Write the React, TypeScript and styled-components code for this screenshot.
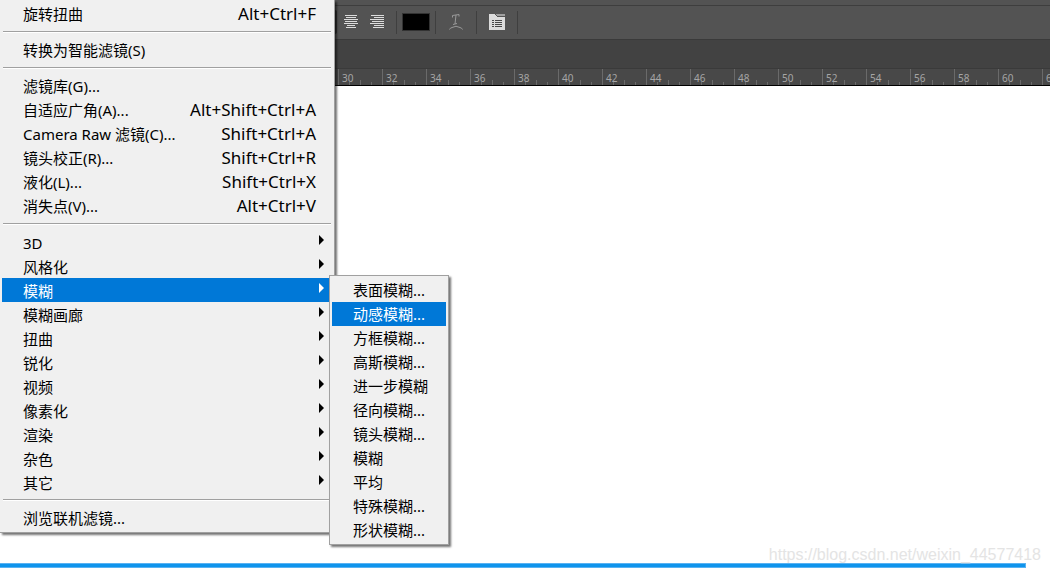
import React from "react";
import styled, { createGlobalStyle } from "styled-components";

const GlobalStyle = createGlobalStyle`
  *, *::before, *::after { box-sizing: border-box; }
  body {
    margin: 0;
    background: #fff;
    color: #000;
    font-family: "Noto Sans", "Noto Sans CJK SC", sans-serif;
    overflow: hidden;
  }
  button { font: inherit; color: inherit; border: 0; background: none; padding: 0; margin: 0; }
`;

const Page = styled.main`
  position: relative;
  display: flex;
  flex-direction: column;
  min-height: 100vh;
  background: #fff;
`;

const Toolbar = styled.header`
  display: flex;
  align-items: center;
  height: 40px;
  padding: 5px 0 0 313px;
  background: linear-gradient(#535353 5px, #3e3e3e 5px, #3e3e3e 6px, #535353 6px);
  border-bottom: 1px solid #3a3a3a;
`;

const ToolButton = styled.button<{ $pressed?: boolean }>`
  display: flex;
  align-items: center;
  justify-content: center;
  width: 24px;
  height: 24px;
  border-radius: 2px;
  background: ${(p) => (p.$pressed ? "#303030" : "transparent")};
`;

const AlignGroup = styled.div`
  display: flex;
  gap: 2px;
  margin-right: 7px;
`;

const Divider = styled.span`
  width: 1px;
  height: 23px;
  background: #3f3f3f;
`;

const Swatch = styled.button`
  width: 28px;
  height: 18px;
  background: #000;
  border: 1px solid #333;
`;

const ToolSlot = styled.div`
  display: flex;
  justify-content: center;
  width: 40px;
`;

const SwatchSlot = styled(ToolSlot)`
  width: 38px;
`;

const TabBar = styled.div`
  height: 28px;
  background: #424242;
`;

const Ruler = styled.div`
  display: flex;
  height: 18px;
  padding-left: 338px;
  background: #484848;
  border-top: 1px solid #3a3a3a;
  border-bottom: 1px solid #000;
  overflow: hidden;
`;

const RulerCell = styled.div`
  display: flex;
  flex: none;
  align-items: flex-end;
  width: 44px;
  color: #a6a6a6;
  font: 10px/14px "Noto Sans", sans-serif;
  border-left: 1px solid #6a6a6a;
  padding-left: 3px;
  background:
    linear-gradient(#6a6a6a, #6a6a6a) 10px 100% / 1px 3px no-repeat,
    linear-gradient(#6a6a6a, #6a6a6a) 21px 100% / 1px 5px no-repeat,
    linear-gradient(#6a6a6a, #6a6a6a) 32px 100% / 1px 3px no-repeat;
`;

const Canvas = styled.section`
  flex: 1;
  display: flex;
  flex-direction: column;
  justify-content: flex-end;
`;

const Watermark = styled.a`
  position: relative;
  align-self: flex-end;
  margin-right: 9px;
  color: #e4e4e4;
  font: 16px/16px "Liberation Sans", sans-serif;
  text-decoration: none;
`;

const Progress = styled.div`
  height: 5px;
  margin: 0 24px 5px 0;
  background: #0f94ec;
  border: solid #59b2f2;
  border-width: 1px 1px 1px 0;
`;

const Menu = styled.nav`
  position: absolute;
  background: #f0f0f0;
  padding: 2px;
  border: 1px solid #a0a0a0;
  box-shadow: 2px 2px 2px rgba(0, 0, 0, 0.55);
  font-size: 15px;
  line-height: 24px;
`;

const MainMenu = styled(Menu)`
  top: 0;
  left: 0;
  width: 335px;
  border-width: 0 1px 1px 0;
`;

const SubMenu = styled(Menu)`
  top: 275px;
  left: 329px;
  width: 120px;
`;

const MenuItem = styled.button<{ $active?: boolean }>`
  display: flex;
  justify-content: space-between;
  width: 100%;
  height: 24px;
  padding: 0 16px 0 21px;
  text-align: left;
  white-space: nowrap;
  line-height: 24px;
  background: ${(p) => (p.$active ? "#0078d7" : "transparent")};
  color: ${(p) => (p.$active ? "#fff" : "#000")};
`;

const Shortcut = styled.span`
  font-size: 17px;
`;

const ParentItem = styled(MenuItem)`
  padding-top: 1px;
  padding-right: 8px;
`;

const Arrow = styled.svg`
  width: 5px;
  height: 10px;
  margin-top: 4px;
  fill: currentColor;
`;

const Separator = styled.hr`
  height: 2px;
  margin: 5px 1px;
  border: 0;
  border-top: 1px solid #a0a0a0;
  background: #fff;
`;

type Entry = { label: string; keys?: string };

const filters: Entry[] = [
  { label: "滤镜库(G)..." },
  { label: "自适应广角(A)...", keys: "Alt+Shift+Ctrl+A" },
  { label: "Camera Raw 滤镜(C)...", keys: "Shift+Ctrl+A" },
  { label: "镜头校正(R)...", keys: "Shift+Ctrl+R" },
  { label: "液化(L)...", keys: "Shift+Ctrl+X" },
  { label: "消失点(V)...", keys: "Alt+Ctrl+V" },
];
const groups = ["3D", "风格化", "模糊", "模糊画廊", "扭曲", "锐化", "视频", "像素化", "渲染", "杂色", "其它"];
const blurs = [
  "表面模糊...", "动感模糊...", "方框模糊...", "高斯模糊...", "进一步模糊", "径向模糊...",
  "镜头模糊...", "模糊", "平均", "特殊模糊...", "形状模糊...",
];
const marks = Array.from({ length: 17 }, (_, i) => 30 + i * 2);

const alignIcons = [
  { name: "左对齐文本", d: "M0 .5h14M0 2.5h10M0 4.5h14M0 6.5h10M0 8.5h14M0 10.5h9M0 12.5h12", pressed: true },
  { name: "居中对齐文本", d: "M1 .5h12M2 2.5h10M0 4.5h14M1 6.5h12M0 8.5h14M3 10.5h8M2 12.5h10" },
  { name: "右对齐文本", d: "M1 .5h13M4 2.5h10M0 4.5h14M2 6.5h12M0 8.5h14M4 10.5h10M3 12.5h11" },
];

export default function App() {
  return (
    <Page>
      <GlobalStyle />
      <Toolbar>
        <AlignGroup>
          {alignIcons.map((icon) => (
            <ToolButton key={icon.name} aria-label={icon.name} $pressed={icon.pressed}>
              <svg width="14" height="14" fill="none" stroke="#dcdcdc" shapeRendering="crispEdges">
                <path d={icon.d} />
              </svg>
            </ToolButton>
          ))}
        </AlignGroup>
        <Divider />
        <SwatchSlot>
          <Swatch aria-label="文本颜色" />
        </SwatchSlot>
        <Divider />
        <ToolSlot>
          <ToolButton aria-label="文字变形">
            <svg width="14" height="16" fill="none" stroke="#999">
              <path d="M3.5 3.5V1.5L10 .5V2.5M7 1L6 10M4 10.5L8 9.5M.5 15.5Q1 14 3 13.5Q7 11 11 13.5Q13 14 13.5 15.5" />
            </svg>
          </ToolButton>
        </ToolSlot>
        <Divider />
        <ToolSlot>
          <ToolButton aria-label="切换字符和段落面板">
            <svg width="16" height="16" shapeRendering="crispEdges">
              <path fill="#dcdcdc" d="M0 0h6l2 3h8v13H0z" />
              <path fill="#a0a0a0" d="M7 0h9v2H8z" />
              <path stroke="#484848" d="M3 6.5h2M6 6.5h7M3 8.5h2M6 8.5h7M3 10.5h2M6 10.5h7M3 12.5h2M6 12.5h7" />
            </svg>
          </ToolButton>
        </ToolSlot>
        <Divider />
      </Toolbar>
      <TabBar />
      <Ruler>
        {marks.map((m) => (
          <RulerCell key={m}>{m}</RulerCell>
        ))}
      </Ruler>
      <Canvas>
        <Watermark href="https://blog.csdn.net/weixin_44577418">https://blog.csdn.net/weixin_44577418</Watermark>
        <Progress />
      </Canvas>

      <MainMenu aria-label="滤镜">
        <MenuItem><span>旋转扭曲</span><Shortcut>Alt+Ctrl+F</Shortcut></MenuItem>
        <Separator />
        <MenuItem>转换为智能滤镜(S)</MenuItem>
        <Separator />
        {filters.map((f) => (
          <MenuItem key={f.label}>
            <span>{f.label}</span>
            {f.keys && <Shortcut>{f.keys}</Shortcut>}
          </MenuItem>
        ))}
        <Separator />
        {groups.map((g) => (
          <ParentItem key={g} $active={g === "模糊"} aria-haspopup="menu">
            <span>{g}</span>
            <Arrow viewBox="0 0 5 10"><path d="M0 0L5 5L0 10Z" /></Arrow>
          </ParentItem>
        ))}
        <Separator />
        <MenuItem>浏览联机滤镜...</MenuItem>
      </MainMenu>

      <SubMenu aria-label="模糊">
        {blurs.map((b) => (
          <MenuItem key={b} $active={b === "动感模糊..."}>{b}</MenuItem>
        ))}
      </SubMenu>
    </Page>
  );
}
